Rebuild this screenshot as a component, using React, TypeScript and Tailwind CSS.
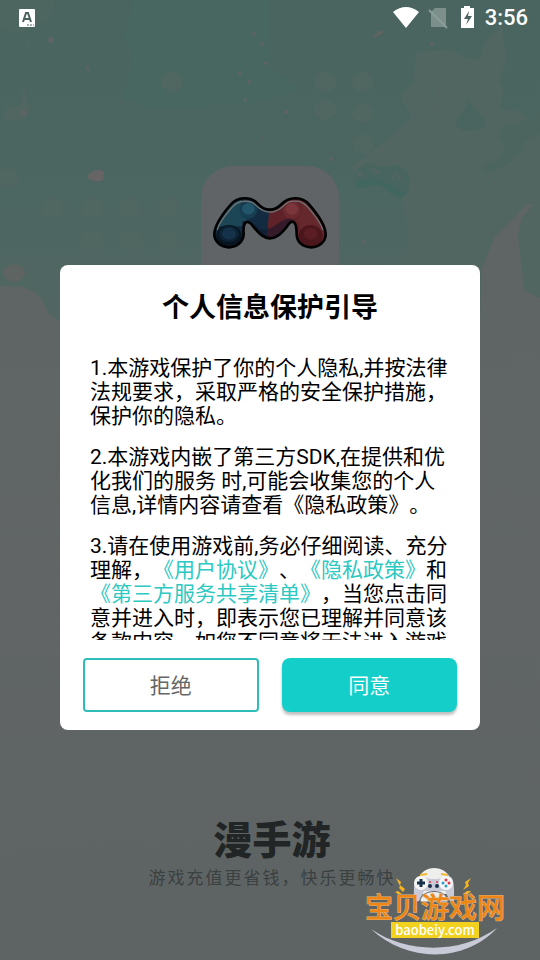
import type { ReactNode } from 'react';

const LINES = [
  '1.本游戏保护了你的个人隐私,并按法律法规要求，采取严格的安全保护措施，保护你的隐私。',
  '2.本游戏内嵌了第三方SDK,在提供和优化我们的服务 时,可能会收集您的个人信息,详情内容请查看《隐私政策》。',
];

const DOTS = [
  [52, 208], [92, 208], [130, 208], [169, 208], [92, 240], [130, 240], [169, 240],
  [325, 82], [363, 82], [363, 113], [325, 110], [363, 144], [8, 178], [172, 82],
];

const PETALS = [
  [51, 40, 3], [28, 46, 1], [88, 69, 2], [254, 34, 2], [262, 44, 2], [266, 63, 2], [240, 73, 2],
  [249, 82, 2], [245, 100, 2], [24, 113, 3], [120, 103, 1], [286, 112, 2], [262, 137, 1],
  [331, 159, 2], [432, 44, 2], [439, 92, 1], [437, 108, 1], [364, 242, 2], [495, 182, 1],
];

function Backdrop() {
  return (
    <svg
      className="absolute inset-0 h-full w-full"
      viewBox="0 0 540 960"
      preserveAspectRatio="none"
      aria-hidden="true"
    >
      <defs>
        <linearGradient id="sky" x1="0" y1="0" x2="0" y2="1">
          <stop offset="0" stopColor="#4a655f" />
          <stop offset="0.5" stopColor="#4b6661" />
          <stop offset="1" stopColor="#526662" />
        </linearGradient>
        <linearGradient id="ground" x1="0" y1="0" x2="0" y2="1">
          <stop offset="0" stopColor="#5d6564" />
          <stop offset="0.6" stopColor="#616565" />
          <stop offset="1" stopColor="#5e6363" />
        </linearGradient>
      </defs>
      <rect width="540" height="960" fill="url(#ground)" />
      <path d="M0 0H540V298L524 290L522 262L518 236L522 218L534 204L526 204L512 220L494 238L482 262L480 330H62V322L48 314L42 298L34 292L24 287L0 286Z" fill="url(#sky)" />
      <path d="M134 0H270V66L298 90L252 104L146 110L124 96L132 56L124 40Z" fill="#486760" />
      <path d="M0 0H55L48 22L28 26L22 34L0 28Z" fill="#4e6660" />
      <path d="M502 24L484 44L480 60L464 58L452 50L416 52L414 82L400 96L412 118L374 150L350 168L400 190L410 240L396 268H482L494 238L512 220L526 204L534 204L522 218L518 236L524 290L540 298V126L522 112L500 108L504 90L498 80L506 62Z" fill="#526661" />
      <path d="M540 114L512 124L500 128L498 138L506 146L500 158L482 166L486 174L502 168L522 152L524 142L540 134Z" fill="#4d655f" />
      <path d="M468 98C474 112 486 116 486 124C484 132 458 134 456 124C456 116 466 112 468 98Z" fill="#4a655f" />
      <path d="M24 88L30 110L22 120L4 120L6 108L20 106Z" fill="#516660" />
      {DOTS.map(([cx, cy]) => (
        <ellipse key={`${cx}-${cy}`} cx={cx} cy={cy} rx="11" ry="10" fill="#506661" />
      ))}
      {PETALS.map(([cx, cy, r]) => (
        <circle key={`${cx}-${cy}`} cx={cx} cy={cy} r={r} fill="#5d6562" />
      ))}
      <path d="M87 177C89 172 96 169 102 170L104 173L103 180C98 183 91 181 87 177Z" fill="#666464" />
      <path d="M373 36L379 31L384 31L382 34L375 37Z" fill="#5f6461" />
      <ellipse cx="14" cy="273" rx="11" ry="9" fill="#5d6462" />
      <g transform="translate(340 140)">
        <path d="M16 40C14 28 24 22 32 24C46 30 56 20 66 30C72 38 70 52 64 57C56 60 50 46 38 45C30 44 22 50 16 46Z" fill="#48655f" />
        <path d="M16 41C26 38 36 38 44 42C54 46 60 53 66 51C64 56 60 58 57 57C48 54 46 45 36 45C28 45 22 50 16 46Z" fill="#426660" />
        <g fill="#526661">
          <circle cx="20" cy="34" r="3" />
          <circle cx="33" cy="30" r="2" />
          <circle cx="37" cy="32" r="2" />
          <circle cx="57" cy="34" r="2" />
          <circle cx="53" cy="38" r="2" />
          <circle cx="60" cy="38" r="2" />
        </g>
      </g>
      <path d="M0 858C120 838 200 850 290 846S460 838 540 856V960H0Z" fill="#5e6464" />
    </svg>
  );
}

function StatusBar() {
  return (
    <header className="flex h-9 items-center justify-between pr-3 pl-[19px] text-white">
      <svg className="h-[18px] w-4" viewBox="0 0 16 18" aria-label="输入法">
        <rect width="16" height="18" rx="1" fill="#fff" />
        <path d="M4 13L7 4H9L12 13M5 10H11" fill="none" stroke="#4a625d" strokeWidth="2" />
        <path d="M8 16H10M11 16H13M14 16H15" stroke="#4a625d" />
      </svg>
      <div className="flex items-center">
        <svg className="h-7 w-24" viewBox="0 0 96 28" aria-hidden="true">
          <path d="M4 8Q17 -2 30 8L17 24Z" fill="#fff" />
          <path d="M46 4H57V23H42V8Z" fill="#fff" fillOpacity="0.28" />
          <path d="M40 6L58 24" stroke="#8b9d98" strokeWidth="2" />
          <path d="M75 2H81V4H85V24H72V4H75Z" fill="#fff" />
          <path d="M80 7L75 15H79L77 21L83 12H79Z" fill="#4a625d" />
        </svg>
        <time className="font-[Roboto,sans-serif] text-[22px] leading-7 font-medium">3:56</time>
      </div>
    </header>
  );
}

function AppIcon() {
  const body =
    'M76 238C76 215 100 178 124 150C145 124 185 124 205 145C228 170 256 170 278 147C300 124 340 124 360 148C386 178 410 215 410 238C410 260 390 277 367 277C343 277 323 262 323 238C323 202 313 192 300 206C272 245 256 250 242 250C228 250 214 243 188 208C172 192 161 202 164 238C162 262 142 277 120 277C96 277 76 260 76 238Z';

  return (
    <svg className="size-[138px] rounded-[32px] bg-[#606466]" viewBox="36 33 414 414" aria-label="漫手游">
      <clipPath id="pad">
        <path d={body} />
      </clipPath>
      <g clipPath="url(#pad)">
        <path d="M70 120H245L233 280H70Z" fill="#122b41" />
        <path d="M243 120H420V290H232Z" fill="#5e2228" />
        <path d="M70 120H160C150 150 158 180 178 196L160 214H80Z" fill="#1c4656" />
        <path d="M320 120H420V240H340C330 200 330 200 318 196C345 180 345 150 320 120Z" fill="#65292d" />
        <path d="M160 200C190 190 205 232 236 224L232 256H215L160 210Z" fill="#101f33" />
        <path d="M236 222C262 218 282 184 310 192L262 256H232Z" fill="#351b29" />
        <circle cx="178" cy="165" r="27" fill="#173d50" />
        <ellipse cx="178" cy="162" rx="19" ry="17" fill="#23556a" />
        <circle cx="308" cy="165" r="27" fill="#6a2a2f" />
        <ellipse cx="308" cy="162" rx="19" ry="17" fill="#7b363b" />
        <ellipse cx="120" cy="244" rx="38" ry="34" fill="#08141f" />
        <ellipse cx="120" cy="237" rx="31" ry="24" fill="#0d2233" />
        <ellipse cx="120" cy="236" rx="21" ry="18" fill="#14324a" />
        <ellipse cx="365" cy="242" rx="36" ry="32" fill="#4b171d" />
        <ellipse cx="365" cy="236" rx="21" ry="18" fill="#5a1d23" />
        <path d="M84 225C90 205 110 178 130 156C150 134 185 134 200 150C228 178 256 178 284 152C300 134 334 134 352 152C376 178 396 205 402 225" fill="none" stroke="#6f7375" strokeWidth="4" />
      </g>
      <path d={body} fill="none" stroke="#000" strokeWidth="8" strokeLinejoin="round" />
    </svg>
  );
}

function Agreement({ children }: { children: ReactNode }) {
  return (
    <a href="#agreement" className="text-[#2cc8c2]">
      {children}
    </a>
  );
}

function PrivacyDialog() {
  return (
    <section
      role="dialog"
      aria-modal="true"
      aria-labelledby="privacy-title"
      className="w-full max-w-[420px] rounded-lg bg-white px-[23px] pt-[25px] pb-[18px] text-black"
    >
      <h1 id="privacy-title" className="text-center text-[27px] leading-9 font-bold">
        个人信息保护引导
      </h1>
      <div className="mt-[30px] flex h-[284px] flex-col gap-[17px] overflow-hidden px-[7px] text-[21px] leading-6 [text-spacing-trim:space-all]">
        {LINES.map((line) => (
          <p key={line}>{line}</p>
        ))}
        <p>
          3.请在使用游戏前,务必仔细阅读、充分理解，<Agreement>《用户协议》</Agreement>、
          <Agreement>《隐私政策》</Agreement>和<Agreement>《第三方服务共享清单》</Agreement>
          ，当您点击同意并进入时，即表示您已理解并同意该条款内容，如您不同意将无法进入游戏
        </p>
      </div>
      <div className="mt-[18px] grid grid-cols-2 gap-[23px] text-[21px]">
        <button type="button" className="h-[54px] rounded border-2 border-[#2fbdb9] pt-1 text-[#666]">
          拒绝
        </button>
        <button type="button" className="h-[54px] rounded-lg bg-[#14cfc9] pt-1 text-white shadow-[0_3px_3px_rgba(0,0,0,0.25)]">
          同意
        </button>
      </div>
    </section>
  );
}

function Watermark() {
  return (
    <div className="absolute right-[35px] bottom-1 flex h-[92px] w-[140px] flex-col items-center">
      <svg className="absolute inset-0 h-full w-full" viewBox="0 0 140 92" aria-hidden="true">
        <path d="M6 65C42 90 96 90 132 64C100 99 42 99 6 65Z" fill="#c9cad8" />
        <path d="M31 14L36 18L35 21L40 25L38 28L34 24L35 22ZM30 28L33 27L37 30L33 30Z" fill="#f5b51f" />
        <path d="M106 14L100 18L101 21L98 26L104 22L103 19ZM106 27L102 27L98 30L103 30Z" fill="#f5b51f" />
        <g transform="translate(1 4)">
          <path d="M52 12C56 -4 80 -4 85 12V26H52Z" fill="#eeeeec" />
          <path d="M54 6L61 5V7L54 8ZM75 5L82 6V8L75 7Z" fill="#f1b733" />
          <path d="M51 9C47 13 48 26 48 34L53 33L58 23H79L84 33L88 33C88 26 89 13 85 9C80 7 76 11 68 11C60 11 56 7 51 9Z" fill="#c9cad8" />
          <circle cx="55" cy="15" r="7" fill="#f5f5f5" />
          <circle cx="80" cy="15" r="7" fill="#f5f5f5" />
          <path d="M55 11V19M51 15H59" stroke="#17324a" strokeWidth="3" />
          <circle cx="64" cy="18" r="2" fill="#17324a" />
          <circle cx="71" cy="18" r="2" fill="#17324a" />
          <circle cx="80" cy="12" r="1.5" fill="#e3344b" />
          <circle cx="83" cy="15" r="1.5" fill="#e3344b" />
          <circle cx="77" cy="15" r="1.5" fill="#2d9fd0" />
          <circle cx="80" cy="18" r="1.5" fill="#2d9fd0" />
          <circle cx="64" cy="14" r="1" fill="#e3344b" />
          <circle cx="71" cy="14" r="1" fill="#e3344b" />
          <path d="M54 34C54 20 82 20 82 34Z" fill="#eeeeec" stroke="#666a70" />
        </g>
      </svg>
      <p className="relative mt-8 text-[28px] leading-[26px] font-medium whitespace-nowrap text-[#ef8613] [-webkit-text-stroke:1px_#dcb98a] [paint-order:stroke_fill]">
        宝贝游戏网
      </p>
      <a
        href="#baobeiy"
        className="relative bg-[#f2d21f] px-1 font-['Noto_Sans_CJK_SC',sans-serif] text-[13px] leading-4 font-medium text-white"
      >
        baobeiy.com
      </a>
    </div>
  );
}

export default function App() {
  return (
    <main className="relative flex min-h-screen flex-col overflow-hidden bg-[#606565] font-[Roboto,'Noto_Sans_CJK_SC',sans-serif]" lang="zh-CN">
      <Backdrop />
      <div className="relative flex grow flex-col">
        <StatusBar />
        <div className="mt-[130px] flex justify-center">
          <AppIcon />
        </div>
        <footer className="mt-auto pb-[68px] pl-1 text-center">
          <h2 className="text-[39px] leading-[46px] font-black text-[#212525]">漫手游</h2>
          <p className="text-[17px] leading-7 tracking-[2px] text-[#3b4040]">游戏充值更省钱，快乐更畅快</p>
        </footer>
      </div>
      <div className="absolute inset-0 flex items-center justify-center px-5 pt-[34px]">
        <PrivacyDialog />
      </div>
      <Watermark />
    </main>
  );
}
